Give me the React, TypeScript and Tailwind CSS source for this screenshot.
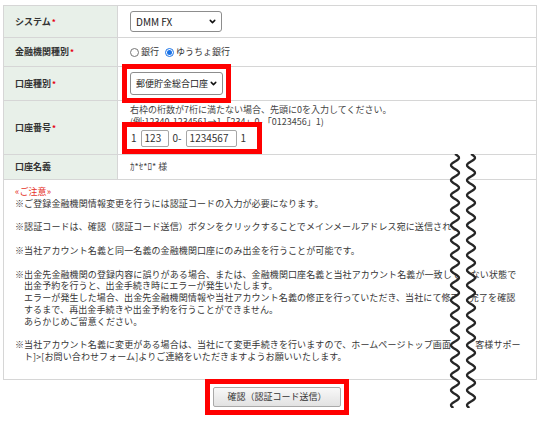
import { ChevronDown } from "lucide-react";

const jp = "font-['Noto_Sans_CJK_JP','Noto_Sans_CJK_SC',sans-serif]";

const Req = () => <span className="ml-[1px] text-[8px] font-bold text-[#e60012] align-top">*</span>;

const makeWave = (cx: number, amp: number, period: number, h: number) => {
  const pts: string[] = [];
  for (let y = 0; y <= h; y += 1) {
    pts.push(`${(cx + amp * Math.sin((y / period) * 2 * Math.PI)).toFixed(2)},${y}`);
  }
  return pts;
};

const Wave = () => {
  const h = 254;
  const a = makeWave(15, 4, 15, h);
  const b = makeWave(31, 4, 15, h);
  return (
    <svg className="absolute left-[440px] top-[154px]" width="46" height={h} viewBox={`0 0 46 ${h}`}>
      <polygon points={[...a, ...b.slice().reverse()].join(" ")} fill="#ffffff" />
      <polyline points={a.join(" ")} fill="none" stroke="#262626" strokeWidth="2.3" />
      <polyline points={b.join(" ")} fill="none" stroke="#262626" strokeWidth="2.3" />
    </svg>
  );
};

const Select = ({ text, w, h, size }: { text: string; w: string; h: string; size: string }) => (
  <span className={`inline-flex items-center justify-between ${w} ${h} ${size} rounded-[3px] border border-[#8d8d8d] bg-white pl-[5px] pr-[4px] text-[#222]`}>
    {text}
    <ChevronDown size={9} strokeWidth={4} className="text-[#111]" />
  </span>
);

const Field = ({ w, v }: { w: string; v: string }) => (
  <span className={`inline-flex h-[17px] ${w} items-center rounded-[2px] border border-[#a6a6a6] bg-white pl-[3px] text-[10px] text-[#333]`}>{v}</span>
);

const Row = ({ label, req, h, children }: { label: string; req?: boolean; h: string; children: React.ReactNode }) => (
  <div className={`flex ${h} border-b border-[#d6d6d6]`}>
    <div className="flex w-[114px] shrink-0 items-center border-r border-[#d6d6d6] bg-[#e8f0e9] pl-[11px] text-[9px] font-bold text-[#333]">
      {label}
      {req && <Req />}
    </div>
    <div className="flex flex-1 items-center pl-[12px]">{children}</div>
  </div>
);

// note line that runs under the cut mark; the part after it is set apart so it lands where the reference has it
const Cut = ({ left, right, gap }: { left: string; right: string; gap: string }) => (
  <div className="flex whitespace-nowrap">
    <span>{left}</span>
    <span className={gap}>{right}</span>
  </div>
);

export default function App() {
  return (
    <div className={`relative h-[441px] w-[540px] overflow-hidden bg-white ${jp}`}>
      <div className="mx-[3px] mt-[5px] border-x border-t border-[#d6d6d6]">
        <Row label="システム" req h="h-[32px]">
          <Select text="DMM FX" w="w-[92px]" h="h-[21px]" size="text-[10px]" />
        </Row>
        <Row label="金融機関種別" req h="h-[29px]">
          <div className="flex items-center text-[9px] text-[#333]">
            <span className="mr-[2px] h-[9px] w-[9px] rounded-full border border-[#767676] bg-white" />
            銀行
            <span className="ml-[6px] mr-[2px] flex h-[9px] w-[9px] items-center justify-center rounded-full border border-[#1a73e8] bg-white">
              <span className="h-[5px] w-[5px] rounded-full bg-[#1a73e8]" />
            </span>
            ゆうちょ銀行
          </div>
        </Row>
        <Row label="口座種別" req h="h-[34px]">
          <span className="relative z-10 ml-[-3px] inline-flex p-[3px] outline-[5px] outline-solid outline-[#ff0000]">
            <Select text="郵便貯金総合口座" w="w-[93px]" h="h-[23px]" size="text-[9px]" />
          </span>
        </Row>
        <Row label="口座番号" req h="h-[54px]">
          <div className="flex h-full flex-col pt-[3px] text-[9px] leading-[11.5px] text-[#444]">
            <div className="whitespace-nowrap">右枠の桁数が7桁に満たない場合、先頭に0を入力してください。</div>
            <div className="whitespace-nowrap">(例:12340-1234561→1「234」0-「0123456」1)</div>
            <div>
              <span className="relative z-10 ml-[-3px] inline-flex h-[22px] items-center gap-[4px] pl-[4px] pr-[11px] text-[10px] text-[#333] outline-[5px] outline-solid outline-[#ff0000]">
                <span>1</span>
                <Field w="w-[28px]" v="123" />
                <span>0-</span>
                <Field w="w-[51px]" v="1234567" />
                <span>1</span>
              </span>
            </div>
          </div>
        </Row>
        <Row label="口座名義" h="h-[25px]">
          <span className="text-[9px] text-[#444]">ｶ*ｾ*ﾛ* 様</span>
        </Row>
      </div>

      <div className="mx-[3px] border-x border-b border-[#d6d6d6] pb-[16px] pl-[11px] pt-[6px] text-[9px] leading-[11.8px] tracking-[0.1px] text-[#363636]">
        <div className="text-[#e5332a]">«ご注意»</div>
        <div>※ご登録金融機関情報変更を行うには認証コードの入力が必要になります。</div>
        <div className="h-[11.8px]" />
        <div className="whitespace-nowrap">※認証コードは、確認（認証コード送信）ボタンをクリックすることでメインメールアドレス宛に送信されます。</div>
        <div className="h-[11.8px]" />
        <div>※当社アカウント名義と同一名義の金融機関口座にのみ出金を行うことが可能です。</div>
        <div className="h-[11.8px]" />
        <Cut left="※出金先金融機関の登録内容に誤りがある場合、または、金融機関口座名義と当社アカウント名義が一致してい" right="ない状態で" gap="ml-[1px]" />
        <div className="pl-[9px]">
          <div>出金予約を行うと、出金手続き時にエラーが発生いたします。</div>
          <Cut left="エラーが発生した場合、出金先金融機関情報や当社アカウント名義の修正を行っていただき、当社にて修正の" right="完了を確認" gap="ml-[1px]" />
          <div>するまで、再出金手続きや出金予約を行うことができません。</div>
          <div>あらかじめご留意ください。</div>
        </div>
        <div className="h-[11.8px]" />
        <Cut left="※当社アカウント名義に変更がある場合は、当社にて変更手続きを行いますので、ホームページトップ画面［お" right="客様サポー" gap="ml-[6px]" />
        <div className="pl-[9px]">ト]&gt;[お問い合わせフォーム]よりご連絡をいただきますようお願いいたします。</div>
      </div>

      <div className="mt-[4px] flex pl-[210px]">
        <span className="relative z-10 inline-flex p-[3px] outline-[5px] outline-solid outline-[#ff0000]">
          <button className="h-[20px] w-[128px] rounded-[2px] border border-[#a9a9a9] bg-gradient-to-b from-[#f8f8f8] to-[#e2e2e2] text-[9px] text-[#333]">
            確認（認証コード送信）
          </button>
        </span>
      </div>

      <Wave />
    </div>
  );
}
